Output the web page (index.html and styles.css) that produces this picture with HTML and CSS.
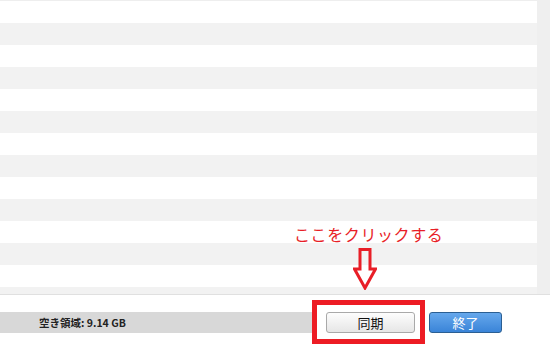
FILE: index.html
```html
<!DOCTYPE html>
<html lang="ja">
<head>
    <meta charset="UTF-8">
    <title>同期</title>
    <link rel="stylesheet" href="styles.css">
</head>
<body>
<div id="window">
    <div id="content">
        <div id="list">
            <div class="row"></div><div class="row"></div><div class="row"></div><div class="row"></div>
            <div class="row"></div><div class="row"></div><div class="row"></div><div class="row"></div>
            <div class="row"></div><div class="row"></div><div class="row"></div><div class="row"></div>
            <div class="row"></div><div class="row"></div>
        </div>
        <div id="scrollbar"></div>
    </div>
    <div id="footer">
        <div id="storage">空き領域: 9.14 GB</div>
        <button class="btn btn-sync">同期</button>
        <button class="btn btn-done">終了</button>
    </div>

    <!-- 注釈 -->
    <div id="note">ここをクリックする</div>
    <svg id="arrow" width="24" height="42" viewBox="0 0 24 42">
        <path d="M7 1.5 H17 V21 H22.5 L12 40 L1.5 21 H7 Z" fill="none" stroke="#e81e27" stroke-width="3" stroke-linejoin="miter"/>
    </svg>
    <div id="highlight"></div>
</div>
</body>
</html>
```

FILE: styles.css
```css
body {
    margin: 0;
    background: #fff;
    font-family: "Noto Sans CJK JP", "Liberation Sans", sans-serif;
}
#window {
    position: relative;
    width: 550px;
    height: 350px;
    overflow: hidden;
}
#content {
    display: flex;
    height: 294px;
    border-bottom: 1px solid #e0e0e0;
}
#list {
    flex: 1;
    border-top: 1px solid #eeeeee;
    overflow: hidden;
}
.row {
    height: 22px;
}
.row:nth-child(even) {
    background: #f2f2f2;
}
#scrollbar {
    width: 13px;
    background: #efefef;
}
#footer {
    display: flex;
    align-items: center;
    padding-top: 17px;
}
#storage {
    width: 277px;
    height: 21px;
    padding-left: 39px;
    display: flex;
    align-items: center;
    background: #d8d8d8;
    font-size: 10.5px;
    font-weight: bold;
    color: #222;
}
.btn {
    height: 21px;
    padding: 0;
    border-radius: 3px;
    font-family: "Noto Sans CJK JP", sans-serif;
    font-size: 13px;
    line-height: 19px;
}
.btn-sync {
    width: 89px;
    margin-left: 10px;
    border: 1px solid #a9a9a9;
    background: linear-gradient(#fdfdfd, #e6e6e6);
    color: #111;
}
.btn-done {
    width: 73px;
    margin-left: 14px;
    border: 1px solid #2b5f93;
    background: linear-gradient(#66a8ec, #3a84d8);
    color: #fff;
}
#note {
    position: absolute;
    left: 294px;
    top: 222px;
    font-size: 16px;
    color: #e81e27;
    letter-spacing: 0.6px;
}
#arrow {
    position: absolute;
    left: 353px;
    top: 248px;
}
#highlight {
    position: absolute;
    left: 312px;
    top: 300px;
    width: 103px;
    height: 34px;
    border: 5px solid #ed1c24;
}
```
